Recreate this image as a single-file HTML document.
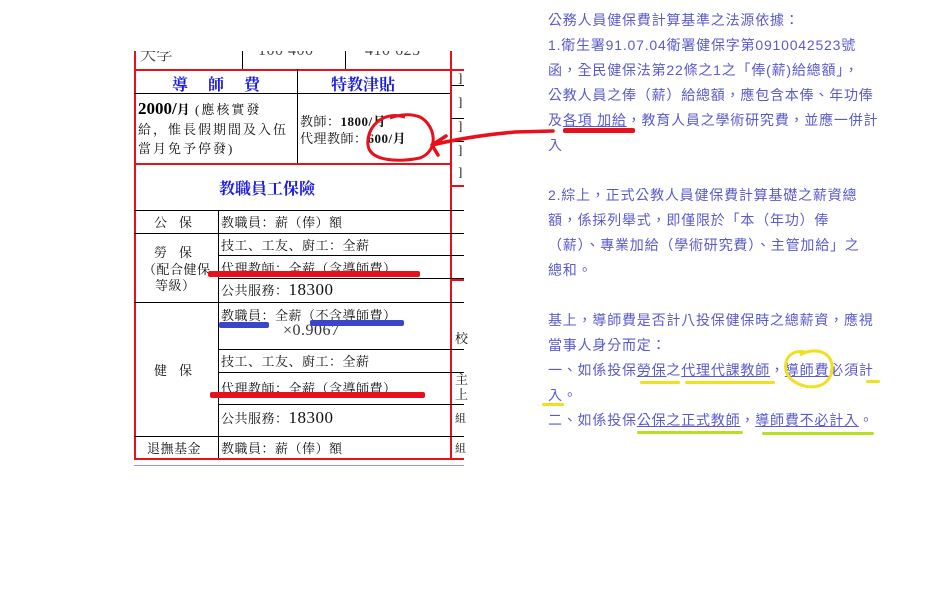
<!DOCTYPE html>
<html><head><meta charset="utf-8"><style>
body{margin:0;width:939px;height:590px;background:#fff;position:relative;overflow:hidden;font-family:"Liberation Serif","Noto Serif CJK SC","Noto Sans CJK TC",serif;}
.a{position:absolute;white-space:nowrap}
.h{position:absolute;height:1px;background:#000}
.v{position:absolute;width:1px;background:#000}
.rh{position:absolute;height:2px;background:#e8101a}
.rv{position:absolute;width:2px;background:#e8101a}
.t{font-size:13px;color:#111;letter-spacing:0.5px}
.b{color:#1a1ae0;font-weight:bold;font-size:16px}
.r{position:absolute;font-family:"Liberation Sans","Noto Sans CJK TC",sans-serif;font-size:14px;color:#5a5acc;white-space:nowrap;left:548px;letter-spacing:0.8px}
.m{position:absolute;height:3px;border-radius:2px}
</style></head><body>
<!-- table frame -->
<div class="rv" style="left:134px;top:50px;height:410px"></div>
<div class="rv" style="left:450px;top:50px;height:410px"></div>
<div class="rh" style="left:134px;top:69px;width:330px"></div>
<div class="h" style="left:134px;top:93px;width:316px"></div>
<div class="v" style="left:297px;top:69px;height:94px"></div>
<div class="v" style="left:242px;top:50px;height:19px"></div>
<div class="v" style="left:345px;top:50px;height:19px"></div>
<div class="rh" style="left:134px;top:163px;width:316px"></div>
<div class="h" style="left:134px;top:210px;width:330px"></div>
<div class="h" style="left:134px;top:233px;width:330px"></div>
<div class="v" style="left:218px;top:210px;height:250px"></div>
<div class="h" style="left:218px;top:255px;width:246px"></div>
<div class="h" style="left:218px;top:278px;width:246px"></div>
<div class="h" style="left:134px;top:302px;width:330px"></div>
<div class="h" style="left:218px;top:349px;width:246px"></div>
<div class="h" style="left:218px;top:372px;width:246px"></div>
<div class="h" style="left:218px;top:404px;width:246px"></div>
<div class="h" style="left:134px;top:436px;width:330px"></div>
<div class="rh" style="left:134px;top:458px;width:330px"></div>
<div class="a" style="left:134px;top:465px;width:330px;height:1px;background:#8f97e8"></div>
<!-- right column bits -->
<div class="h" style="left:451px;top:85px;width:13px"></div>
<div class="h" style="left:451px;top:118px;width:13px"></div>
<div class="h" style="left:451px;top:141px;width:13px"></div>
<div class="rh" style="left:451px;top:185px;width:13px"></div>
<div class="rh" style="left:451px;top:279px;width:13px"></div>
<div class="a t" style="left:458px;top:70px">]</div>
<div class="a t" style="left:458px;top:94px">]</div>
<div class="a t" style="left:458px;top:118px">]</div>
<div class="a t" style="left:458px;top:142px">]</div>
<div class="a t" style="left:458px;top:164px">]</div>
<div class="a t" style="left:455px;top:328px">校</div>
<div class="a t" style="left:455px;top:372px;line-height:15px">主<br>上</div>
<div class="a t" style="left:455px;top:410px;font-size:11px">組</div>
<div class="a t" style="left:455px;top:440px;font-size:11px">組</div>
<!-- text -->
<div class="a t" style="left:140px;top:42px;color:#444;font-size:16px">大学</div>
<div class="a t" style="left:258px;top:42px;color:#444;font-size:16px">100 400</div>
<div class="a t" style="left:365px;top:42px;color:#444;font-size:16px">410 625</div>
<div class="a" style="left:120px;top:0;width:360px;height:51px;background:#fff"></div>
<div class="a b" style="left:172px;top:72px;letter-spacing:8px">導 師 費</div>
<div class="a b" style="left:331px;top:72px">特教津貼</div>
<div class="a" style="left:138px;top:99px;font-size:17px;font-weight:bold">2000/<span style="font-size:13px">月</span><span class="t" style="font-weight:normal;letter-spacing:2px"> (應核實發</span></div>
<div class="a t" style="left:138px;top:119px;letter-spacing:2px">給，惟長假期間及入伍</div>
<div class="a t" style="left:138px;top:138px;letter-spacing:2px">當月免予停發)</div>
<div class="a t" style="left:300px;top:111px">教師：<b>1800/月</b></div>
<div class="a t" style="left:300px;top:128px">代理教師：<b>600/月</b></div>
<div class="a b" style="left:219px;top:176px">教職員工保險</div>
<div class="a t" style="left:154px;top:212px;letter-spacing:12px">公保</div>
<div class="a t" style="left:221px;top:212px">教職員：薪（俸）額</div>
<div class="a t" style="left:154px;top:242px;letter-spacing:12px">勞保</div>
<div class="a t" style="left:143px;top:259px">（配合健保</div>
<div class="a t" style="left:155px;top:275px">等級）</div>
<div class="a t" style="left:221px;top:235px">技工、工友、廚工：全薪</div>
<div class="a t" style="left:221px;top:258px">代理教師：全薪（含導師費）</div>
<div class="a t" style="left:221px;top:280px">公共服務：<span style="font-size:17px">18300</span></div>
<div class="a t" style="left:221px;top:305px">教職員：全薪（不含導師費）</div>
<div class="a t" style="left:283px;top:322px;font-size:16px;color:#333">×0.9067</div>
<div class="a t" style="left:154px;top:360px;letter-spacing:12px">健保</div>
<div class="a t" style="left:221px;top:351px">技工、工友、廚工：全薪</div>
<div class="a t" style="left:221px;top:378px">代理教師：全薪（含導師費）</div>
<div class="a t" style="left:221px;top:408px">公共服務：<span style="font-size:17px">18300</span></div>
<div class="a t" style="left:147px;top:438px">退撫基金</div>
<div class="a t" style="left:221px;top:438px">教職員：薪（俸）額</div>
<!-- marks on table -->
<div class="m" style="left:208px;top:271px;width:212px;height:6px;background:#e8101a"></div>
<div class="m" style="left:219px;top:322px;width:50px;height:6px;background:#3a45c8"></div>
<div class="m" style="left:310px;top:320px;width:94px;height:6px;background:#3a45c8"></div>
<div class="m" style="left:210px;top:392px;width:215px;height:6px;background:#e8101a"></div>
<!-- right text -->
<div class="r" style="top:10px">公務人員健保費計算基準之法源依據：</div>
<div class="r" style="top:35px">1.衛生署91.07.04衛署健保字第0910042523號</div>
<div class="r" style="top:60px">函，全民健保法第22條之1之「俸(薪)給總額」，</div>
<div class="r" style="top:85px">公教人員之俸（薪）給總額，應包含本俸、年功俸</div>
<div class="r" style="top:110px">及<u>各項 加給</u>，教育人員之學術研究費，並應一併計</div>
<div class="r" style="top:135px">入</div>
<div class="r" style="top:185px">2.綜上，正式公教人員健保費計算基礎之薪資總</div>
<div class="r" style="top:210px">額，係採列舉式，即僅限於「本（年功）俸</div>
<div class="r" style="top:235px">（薪）、專業加給（學術研究費）、主管加給」之</div>
<div class="r" style="top:260px">總和。</div>
<div class="r" style="top:310px">基上，導師費是否計八投保健保時之總薪資，應視</div>
<div class="r" style="top:335px">當事人身分而定：</div>
<div class="r" style="top:360px">一、如係投保<u>勞保</u>之<u>代理代課教師</u>，<u>導師費</u>必須計</div>
<div class="r" style="top:385px">入。</div>
<div class="r" style="top:410px">二、如係投保<u>公保之正式教師</u>，<u>導師費不必計入</u>。</div>
<div class="m" style="left:563px;top:128px;width:72px;height:5px;background:#e8101a"></div>
<div class="m" style="left:640px;top:381px;width:40px;background:#f0e020"></div>
<div class="m" style="left:685px;top:381px;width:90px;background:#f0e020"></div>
<div class="m" style="left:866px;top:380px;width:14px;background:#f0e020"></div>
<div class="m" style="left:542px;top:403px;width:22px;background:#f0e020"></div>
<div class="m" style="left:637px;top:431px;width:106px;background:#b8e020"></div>
<div class="m" style="left:762px;top:432px;width:112px;background:#b8e020"></div>
<svg class="a" style="left:0;top:0" width="939" height="590">
<path d="M553 131 L515 132 Q470 136 432 145 M432 145 L446 136 M432 145 L438 155" fill="none" stroke="#e8101a" stroke-width="3.5" stroke-linecap="round"/>
<path d="M405 117 C380 110 366 130 368 145 C370 162 400 162 420 158 C440 150 435 125 420 117 C410 113 398 115 390 118" fill="none" stroke="#e8101a" stroke-width="3"/>
<path d="M805 352 C785 348 780 370 792 380 C808 392 830 388 832 370 C834 352 815 346 800 355" fill="none" stroke="#f0e020" stroke-width="3"/>
</svg>
</body></html>
